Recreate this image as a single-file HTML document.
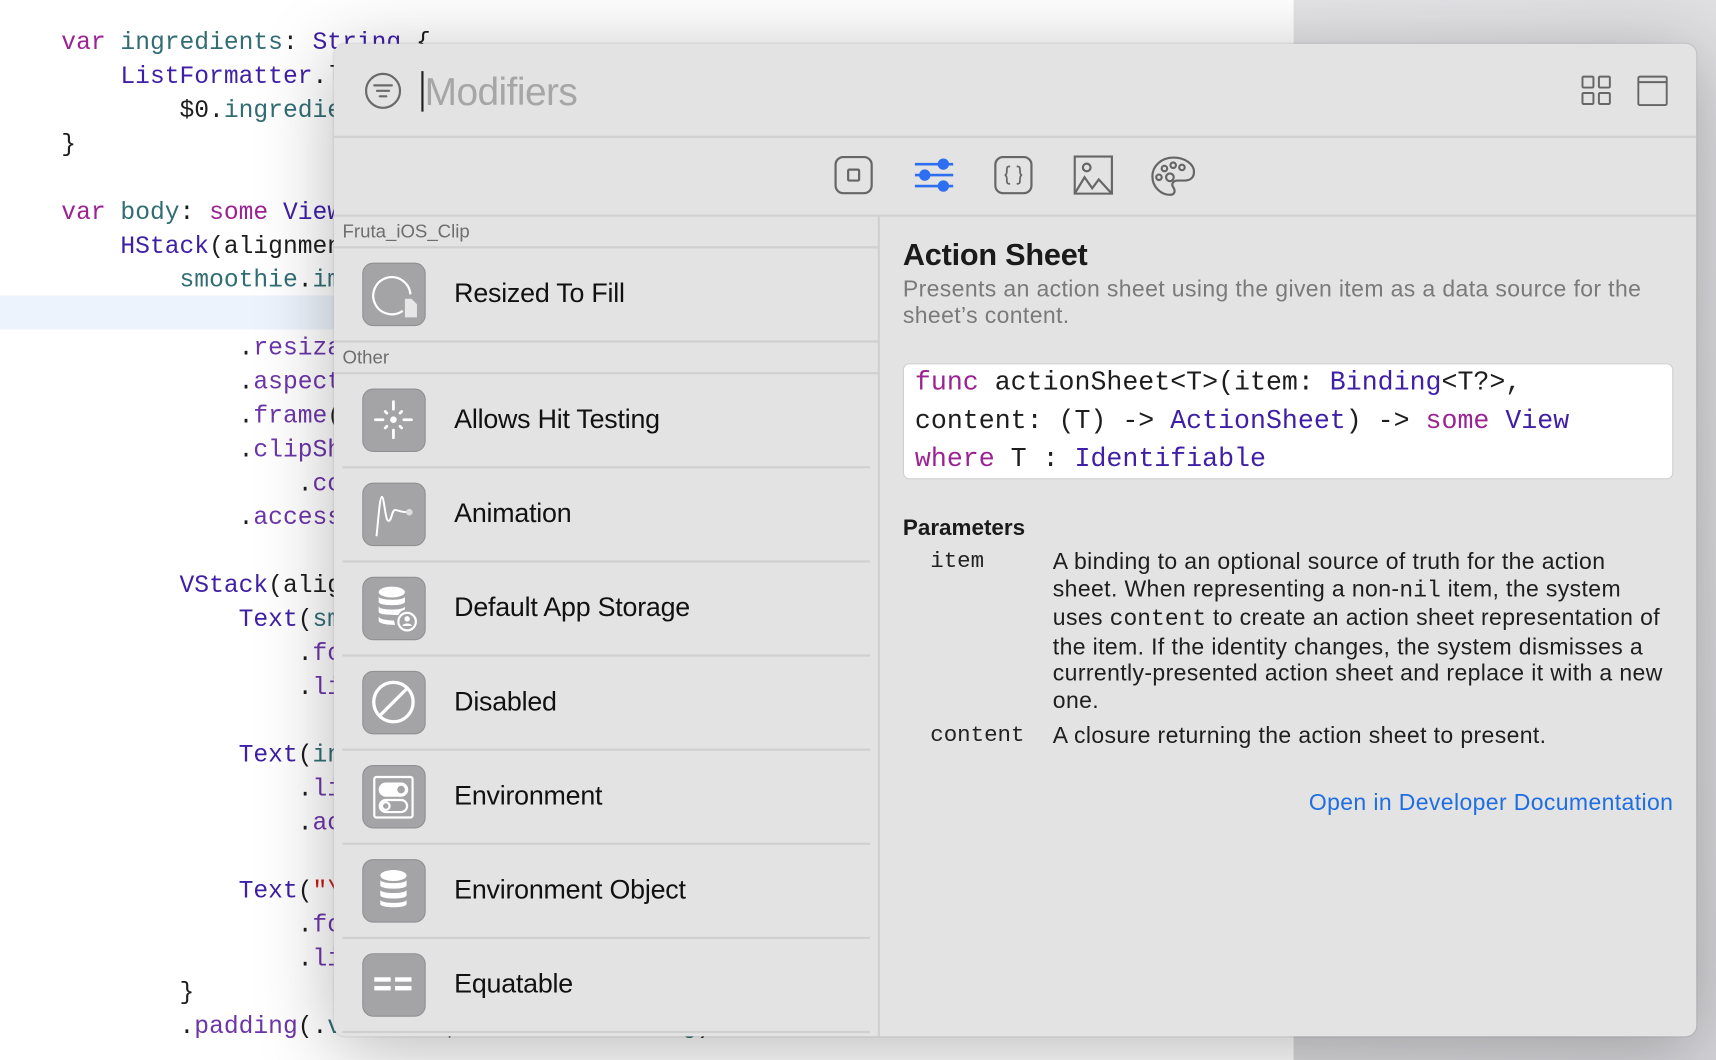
<!DOCTYPE html>
<html><head><meta charset="utf-8"><style>
*{margin:0;padding:0;box-sizing:border-box}
html,body{width:1716px;height:1060px;overflow:hidden;background:#fff}
#s{position:absolute;left:0;top:0;width:1568px;height:969px;transform:scale(1.09439);transform-origin:0 0;font-family:"Liberation Sans",sans-serif;overflow:hidden;background:#fff}
.abs{position:absolute}
.code{position:absolute;font-family:"Liberation Mono",monospace;font-size:22.5px;white-space:pre;color:#1d1d1d;line-height:31px}
.k{color:#9b2393}.t{color:#3f1fa6}.p{color:#326d74}.m{color:#6c36a9}.r{color:#c41a16}
#panel{position:absolute;left:305px;top:40px;width:1245px;height:907px;background:#e3e3e3;border-radius:10px;box-shadow:0 12px 70px rgba(0,0,0,.28),0 0 0 1px rgba(0,0,0,.08);overflow:hidden}
.hl{position:absolute;height:2px;background:#d0d0d0}
.row{position:absolute;left:0;width:498px;height:86px}
.ic{position:absolute;left:26px;top:14px;width:58px;height:58px;border-radius:10px;background:#a4a4a7;border:1.5px solid #909093}
.ic svg{position:absolute;left:0;top:0}
.lbl{position:absolute;left:110px;top:0;line-height:86px;font-size:24.5px;color:#111;letter-spacing:-.2px}
.sec{position:absolute;left:8px;font-size:17px;color:#6e6e6e}
.desc{font-size:21px;letter-spacing:.35px;white-space:nowrap}
.mono{font-family:"Liberation Mono",monospace;letter-spacing:0}
</style></head><body><div id="s">
<div class="abs" style="left:1182px;top:0;width:386px;height:969px;background:linear-gradient(135deg,#e4e4e7,#d6d6da)"></div>
<div class="abs" style="left:0;top:270px;width:400px;height:31px;background:#edf3fc"></div>
<div class="code" style="left:56px;top:24px"><span class="k">var</span> <span class="p">ingredients</span>: <span class="t">String</span> {
    <span class="t">ListFormatter</span>.localizedString(
        $0.<span class="p">ingredient</span>
}

<span class="k">var</span> <span class="p">body</span>: <span class="k">some</span> <span class="t">View</span> {
    <span class="t">HStack</span>(alignment: .top) {
        <span class="p">smoothie</span>.<span class="p">image</span>

            .<span class="m">resizable</span>()
            .<span class="m">aspectRatio</span>()
            .<span class="m">frame</span>(width: 60)
            .<span class="m">clipShape</span>(
                .<span class="m">continuous</span>)
            .<span class="m">accessibility</span>()

        <span class="t">VStack</span>(alignment: .leading) {
            <span class="t">Text</span>(<span class="p">smoothie</span>)
                .<span class="m">font</span>(.headline)
                .<span class="m">lineLimit</span>(1)

            <span class="t">Text</span>(<span class="p">ingredients</span>)
                .<span class="m">lineLimit</span>(2)
                .<span class="m">accessibility</span>()

            <span class="t">Text</span>(<span class="r">"\(calories)"</span>)
                .<span class="m">font</span>(.subheadline)
                .<span class="m">lineLimit</span>(1)
        }
        .<span class="m">padding</span>(.<span class="p">vertical</span>, <span class="p">verticalPadding</span>)</div>

<div id="panel">
  <svg class="abs" style="left:27px;top:25px" width="36" height="36" viewBox="0 0 36 36"><circle cx="18" cy="18" r="15.5" fill="none" stroke="#6a6a6a" stroke-width="2"/><path d="M10 13h16M12.5 18h11M15 23h6" stroke="#6a6a6a" stroke-width="2" stroke-linecap="round"/></svg>
  <div class="abs" style="left:80px;top:25px;width:2px;height:37px;background:#222"></div>
  <div class="abs" style="left:83px;top:24px;font-size:35.5px;color:#a6a6a6;letter-spacing:-.5px">Modifiers</div>
  <svg class="abs" style="left:1140px;top:29px" width="28" height="28" viewBox="0 0 28 28" fill="none" stroke="#666" stroke-width="1.8"><rect x="1" y="1" width="10" height="10" rx="1"/><rect x="16" y="1" width="10" height="10" rx="1"/><rect x="1" y="16" width="10" height="10" rx="1"/><rect x="16" y="16" width="10" height="10" rx="1"/></svg>
  <svg class="abs" style="left:1191px;top:29px" width="28" height="28" viewBox="0 0 28 28" fill="none" stroke="#666" stroke-width="1.8"><rect x="1" y="1" width="26" height="26" rx="1.5"/><path d="M1 6h26"/></svg>
  <div class="hl" style="left:0;top:84px;width:1245px"></div>
  <svg class="abs" style="left:457px;top:102px" width="36" height="36" viewBox="0 0 36 36" fill="none" stroke="#666" stroke-width="2"><rect x="1.5" y="1.5" width="33" height="33" rx="7"/><rect x="13" y="13" width="10" height="10" rx="1"/></svg>
  <svg class="abs" style="left:530px;top:102px" width="38" height="36" viewBox="0 0 38 36" stroke="#2e6ef0" stroke-width="2.4" fill="#2e6ef0"><path d="M1 8h35M1 18h35M1 28h35"/><circle cx="27" cy="8" r="4"/><circle cx="10" cy="18" r="4"/><circle cx="27" cy="28" r="4"/></svg>
  <svg class="abs" style="left:603px;top:102px" width="36" height="36" viewBox="0 0 36 36" fill="none" stroke="#666" stroke-width="2"><rect x="1.5" y="1.5" width="33" height="33" rx="7"/><path d="M15 10c-3 0-3 1-3 4s-1 4-2 4c1 0 2 1 2 4s0 4 3 4M21 10c3 0 3 1 3 4s1 4 2 4c-1 0-2 1-2 4s0 4-3 4" stroke-width="1.6"/></svg>
  <svg class="abs" style="left:676px;top:102px" width="36" height="36" viewBox="0 0 36 36" fill="none" stroke="#666" stroke-width="2"><rect x="1" y="1" width="34" height="34"/><circle cx="12" cy="11" r="3.5"/><path d="M1 35l9-15 7 10 6-8 12 13"/></svg>
  <svg class="abs" style="left:746px;top:102px" width="42" height="38" viewBox="0 0 42 38" fill="none" stroke="#666" stroke-width="2"><path d="M21 2C10 2 2 10 2 19c0 10 8 17 16 17 5 0 5-4 3-7-2-3 0-6 4-6h6c6 0 9-3 9-8C40 8 32 2 21 2z"/><circle cx="13" cy="12" r="2.5"/><circle cx="21" cy="9" r="2.5"/><circle cx="29" cy="11" r="2.5"/><circle cx="8" cy="20" r="2.5"/><circle cx="18" cy="20" r="3.5"/></svg>
  <div class="hl" style="left:0;top:156px;width:1245px"></div>
  <div class="abs" style="left:497px;top:157px;width:2px;height:760px;background:#d0d0d0"></div>
  <div class="sec" style="top:162px">Fruta_iOS_Clip</div>
  <div class="hl" style="left:0;top:185px;width:497px"></div>
  <div class="row" style="top:186px"><div class="ic"><svg width="55" height="55" viewBox="0 0 55 55"><path d="M36 43A17 17 0 1 1 43 28" fill="none" stroke="#fff" stroke-width="2"/><path d="M38 32h6l5 5v12H38z" fill="#e6e6e6"/></svg></div><div class="lbl">Resized To Fill</div></div>
  <div class="hl" style="left:0;top:271px;width:497px"></div>
  <div class="sec" style="top:277px">Other</div>
  <div class="hl" style="left:0;top:300px;width:497px"></div>
  <div class="row" style="top:301px"><div class="ic"><svg width="55" height="55" viewBox="0 0 55 55" stroke="#fff" stroke-width="2.5" stroke-linecap="round"><circle cx="27.5" cy="27.5" r="3" fill="#fff" stroke="none"/><path d="M27.5 11v7M27.5 37v7M11 27.5h7M37 27.5h7M20 20l1.5 1.5M35 20l-1.5 1.5M20 35l1.5-1.5M35 35l-1.5-1.5"/></svg></div><div class="lbl">Allows Hit Testing</div></div>
  <div class="hl" style="left:8px;top:386px;width:482px"></div>
  <div class="row" style="top:387px"><div class="ic"><svg width="55" height="55" viewBox="0 0 55 55" fill="none" stroke="#fff" stroke-width="1.8"><path d="M12 48C14 30 15 12 17 12s3 22 6 22 3-10 6-10 4 2 12 2"/><circle cx="42" cy="26" r="3" fill="#ddd" stroke="none"/></svg></div><div class="lbl">Animation</div></div>
  <div class="hl" style="left:8px;top:472px;width:482px"></div>
  <div class="row" style="top:473px"><div class="ic"><svg width="55" height="55" viewBox="0 0 55 55" fill="#fff"><ellipse cx="26" cy="13" rx="12" ry="5"/><path d="M14 17c0 4 24 4 24 0v5c0 4-24 4-24 0zM14 26c0 4 24 4 24 0v3a9 9 0 0 0-6 5c-5 0-18 0-18-3zM14 35c0 3 8 4 14 4l1 4c-7 0-15-1-15-4z"/><circle cx="40" cy="40" r="8" fill="none" stroke="#fff" stroke-width="2"/><circle cx="40" cy="37.5" r="2.5"/><path d="M35.5 44c1-3 8-3 9 0z"/></svg></div><div class="lbl">Default App Storage</div></div>
  <div class="hl" style="left:8px;top:558px;width:482px"></div>
  <div class="row" style="top:559px"><div class="ic"><svg width="55" height="55" viewBox="0 0 55 55" fill="none" stroke="#fff" stroke-width="3"><circle cx="27.5" cy="27.5" r="18"/><path d="M15 40L40 15"/></svg></div><div class="lbl">Disabled</div></div>
  <div class="hl" style="left:8px;top:644px;width:482px"></div>
  <div class="row" style="top:645px"><div class="ic"><svg width="55" height="55" viewBox="0 0 55 55" fill="none" stroke="#fff" stroke-width="2"><rect x="10" y="10" width="35" height="37" rx="2"/><rect x="15" y="16" width="25" height="11" rx="5.5" fill="#fff"/><circle cx="34.5" cy="21.5" r="3.5" fill="#a4a4a7" stroke="none"/><rect x="15" y="31" width="25" height="11" rx="5.5"/><circle cx="20.5" cy="36.5" r="3.5"/></svg></div><div class="lbl">Environment</div></div>
  <div class="hl" style="left:8px;top:730px;width:482px"></div>
  <div class="row" style="top:731px"><div class="ic"><svg width="55" height="55" viewBox="0 0 55 55" fill="#fff"><ellipse cx="27.5" cy="14" rx="12" ry="5"/><path d="M15.5 18c0 4 24 4 24 0v5c0 4-24 4-24 0zM15.5 27c0 4 24 4 24 0v5c0 4-24 4-24 0zM15.5 36c0 4 24 4 24 0v4c0 4-24 4-24 0z"/></svg></div><div class="lbl">Environment Object</div></div>
  <div class="hl" style="left:8px;top:816px;width:482px"></div>
  <div class="row" style="top:817px"><div class="ic"><svg width="55" height="55" viewBox="0 0 55 55" fill="#fff"><rect x="10" y="21" width="15" height="4"/><rect x="29" y="21" width="15" height="4"/><rect x="10" y="29" width="15" height="4"/><rect x="29" y="29" width="15" height="4"/></svg></div><div class="lbl">Equatable</div></div>
  <div class="hl" style="left:8px;top:902px;width:482px"></div>
  <div class="abs" style="left:520px;top:177px;font-size:28px;font-weight:bold;color:#1a1a1a;letter-spacing:-.2px">Action Sheet</div>
  <div class="abs desc" style="left:520px;top:213px;color:#7a7a7a;line-height:24px">Presents an action sheet using the given item as a data source for the<br>sheet’s content.</div>
  <div class="abs" style="left:520px;top:292px;width:704px;height:106px;background:#fff;border:1.5px solid #cfcfcf;border-radius:6px"></div>
  <div class="code" style="left:531px;top:293px;font-size:24.3px;line-height:35px;color:#1d1d1d"><span class="k">func</span> actionSheet&lt;T&gt;(item: <span class="t">Binding</span>&lt;T?&gt;,
content: (T) -&gt; <span class="t">ActionSheet</span>) -&gt; <span class="k">some</span> <span class="t">View</span>
<span class="k">where</span> T : <span class="t">Identifiable</span></div>
  <div class="abs" style="left:520px;top:431px;font-size:20.5px;font-weight:bold;color:#1a1a1a">Parameters</div>
  <div class="abs mono" style="left:545px;top:462px;font-size:20.5px;color:#222">item</div>
  <div class="abs desc" style="left:657px;top:462px;color:#1e1e1e;line-height:24.5px">A binding to an optional source of truth for the action<br>sheet. When representing a non-<span class="mono">nil</span> item, the system<br>uses <span class="mono">content</span> to create an action sheet representation of<br>the item. If the identity changes, the system dismisses a<br>currently-presented action sheet and replace it with a new<br>one.</div>
  <div class="abs mono" style="left:545px;top:621px;font-size:20.5px;color:#222">content</div>
  <div class="abs desc" style="left:657px;top:621px;color:#1e1e1e">A closure returning the action sheet to present.</div>
  <div class="abs desc" style="right:21px;top:682px;color:#1f6ee0">Open in Developer Documentation</div>
</div>
</div></body></html>
